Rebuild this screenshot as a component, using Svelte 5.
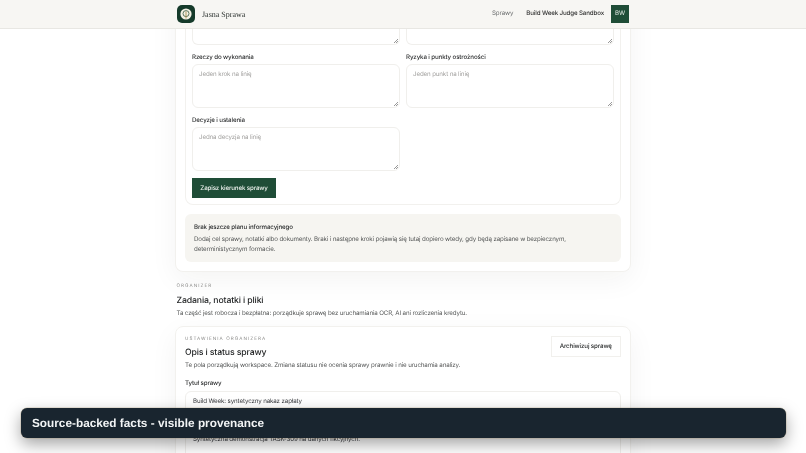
<script>
  const fields = [
    { label: 'Rzeczy do wykonania', hint: 'Jeden krok na linię' },
    { label: 'Ryzyka i punkty ostrożności', hint: 'Jeden punkt na linię' },
    { label: 'Decyzje i ustalenia', hint: 'Jedna decyzja na linię' }
  ];
</script>

<header class="topbar">
  <div class="brand">
    <span class="logo">
      <svg viewBox="0 0 18 18" width="18" height="18" aria-hidden="true">
        <circle cx="9" cy="9" r="5.6" fill="#f3f0e4" />
        <circle cx="9" cy="8.6" r="3" fill="none" stroke="#4d6b50" stroke-width="0.9" />
        <path d="M9 6.5v7" stroke="#a98f4e" stroke-width="0.9" />
      </svg>
    </span>
    <span class="brand-name">Jasna Sprawa</span>
  </div>
  <nav>
    <span class="nav-link">Sprawy</span>
    <span class="nav-user">Build Week Judge Sandbox</span>
    <span class="avatar">BW</span>
  </nav>
</header>

<main>
  <section class="card plan">
    <div class="panel">
      <div class="grid">
        <div class="field">
          <div class="area cut"></div>
        </div>
        <div class="field">
          <div class="area cut"></div>
        </div>
        {#each fields as f}
          <div class="field">
            <span class="label">{f.label}</span>
            <div class="area"><span class="hint">{f.hint}</span></div>
          </div>
        {/each}
      </div>
      <button class="primary">Zapisz kierunek sprawy</button>
    </div>
    <div class="notice">
      <strong>Brak jeszcze planu informacyjnego</strong>
      <p>Dodaj cel sprawy, notatki albo dokumenty. Braki i następne kroki pojawią się tutaj dopiero wtedy, gdy będą zapisane w bezpiecznym, deterministycznym formacie.</p>
    </div>
  </section>

  <section class="organizer">
    <div class="eyebrow">ORGANIZER</div>
    <h2>Zadania, notatki i pliki</h2>
    <p class="lead">Ta część jest robocza i bezpłatna: porządkuje sprawę bez uruchamiania OCR, AI ani rozliczenia kredytu.</p>
  </section>

  <section class="card settings">
    <div class="settings-head">
      <div>
        <div class="eyebrow">USTAWIENIA ORGANIZERA</div>
        <h3>Opis i status sprawy</h3>
        <p class="lead">Te pola porządkują workspace. Zmiana statusu nie ocenia sprawy prawnie i nie uruchamia analizy.</p>
      </div>
      <button class="ghost">Archiwizuj sprawę</button>
    </div>
    <div class="label title-label">Tytuł sprawy</div>
    <div class="input">Build Week: syntetyczny nakaz zapłaty</div>
    <div class="input tall">Syntetyczna demonstracja TASK-309 na danych fikcyjnych.</div>
  </section>
</main>

<div class="toast">Source-backed facts - visible provenance</div>

<style>
  :global(body) {
    margin: 0;
    background: #fff;
    height: 453px;
    overflow: hidden;
    font-family: Inter, "Liberation Sans", sans-serif;
    color: #2a2c2d;
    text-rendering: geometricPrecision;
    letter-spacing: -0.13px;
  }

  .topbar {
    position: relative;
    z-index: 2;
    height: 29px;
    box-sizing: border-box;
    background: #f7f6f3;
    border-bottom: 1px solid #e8e7e3;
    display: flex;
    justify-content: space-between;
    align-items: center;
    padding: 0 177px;
    will-change: transform;
  }

  .brand {
    display: flex;
    align-items: center;
    gap: 7px;
  }

  .logo {
    width: 18px;
    height: 18px;
    border-radius: 5px;
    background: #153a2a;
    display: block;
  }

  .logo svg {
    display: block;
  }

  .brand-name {
    font-family: "Liberation Serif", serif;
    font-size: 8px;
    letter-spacing: 0;
    color: #2d3330;
  }

  nav {
    display: flex;
    align-items: center;
    font-size: 6.2px;
    line-height: 10px;
  }

  .nav-link {
    color: #6c6e6f;
    margin-right: 13px;
  }

  .nav-user {
    font-weight: 500;
    color: #333;
    margin-right: 7px;
  }

  .avatar {
    width: 18px;
    height: 18px;
    background: #1f4d37;
    color: #e4ebe5;
    display: flex;
    align-items: center;
    justify-content: center;
    letter-spacing: 0;
  }

  main {
    width: 456px;
    margin: 0 0 0 175px;
    will-change: transform;
  }

  .card {
    background: #fff;
    border: 1px solid #f2f1ee;
    border-radius: 8px;
    box-sizing: border-box;
    box-shadow: 0 8px 28px rgba(30, 30, 20, 0.05);
  }

  .plan {
    margin-top: -40px;
    height: 283.3px;
    padding: 0 9px;
    border-top: 0;
  }

  .panel {
    height: 216px;
    box-sizing: border-box;
    border: 1px solid #f2f1ee;
    border-top: 0;
    border-radius: 0 0 8px 8px;
    padding: 0 6px;
  }

  .grid {
    display: grid;
    grid-template-columns: 207.5px 207.5px;
    column-gap: 6.5px;
    row-gap: 6.5px;
  }

  .field {
    display: flex;
    flex-direction: column;
  }

  .label {
    font-size: 6.2px;
    font-weight: 500;
    line-height: 11px;
    color: #303233;
    margin-bottom: 1.5px;
  }

  .area {
    height: 44px;
    box-sizing: border-box;
    border: 1px solid #f0efec;
    border-radius: 6px;
    padding: 4.5px 6px;
    position: relative;
    font-size: 6.2px;
    line-height: 9px;
  }

  .area::after {
    content: "";
    position: absolute;
    right: 1px;
    bottom: 1px;
    width: 4px;
    height: 4px;
    background: linear-gradient(135deg, transparent 50%, #999 50%, #999 60%, transparent 60%, transparent 75%, #999 75%, #999 85%, transparent 85%);
  }

  .area.cut {
    height: 56px;
    border-top: 0;
    border-radius: 0 0 6px 6px;
  }

  .hint {
    color: #a09f9d;
  }

  button {
    font-family: inherit;
    font-size: 6.2px;
    font-weight: 500;
    padding: 1px 0 0;
    letter-spacing: -0.13px;
    text-rendering: geometricPrecision;
  }

  .primary {
    display: block;
    margin-top: 6.5px;
    width: 84px;
    height: 20px;
    background: #1f4d37;
    color: #eef2ee;
    border: 0;
  }

  .notice {
    margin-top: 9px;
    height: 48px;
    box-sizing: border-box;
    background: #f6f5f1;
    border-radius: 6px;
    padding: 8.5px 9px;
    font-size: 6.2px;
  }

  .notice strong {
    font-weight: 500;
    display: block;
    color: #2c2e2f;
    line-height: 9px;
    margin-bottom: 3px;
  }

  .notice p {
    margin: 0;
    line-height: 10px;
    color: #555757;
  }

  .organizer {
    margin-top: 10.5px;
    padding-left: 1.5px;
  }

  .eyebrow {
    font-size: 4.6px;
    letter-spacing: 1.06px;
    color: #8a8a88;
    line-height: 7px;
  }

  h2 {
    margin: 5.2px 0 0;
    font-size: 8.7px;
    font-weight: 500;
    line-height: 12px;
    letter-spacing: -0.13px;
    color: #232526;
  }

  .lead {
    margin: 2.5px 0 0;
    font-size: 6.2px;
    line-height: 10px;
    color: #555757;
  }

  .settings {
    margin-top: 6.7px;
    height: 200px;
    padding: 9px 9.5px 0 9px;
  }

  .settings-head {
    display: flex;
    justify-content: space-between;
    align-items: flex-start;
  }

  h3 {
    margin: 3.5px 0 0;
    font-size: 8.7px;
    font-weight: 500;
    line-height: 12px;
    letter-spacing: -0.13px;
    color: #232526;
  }

  .ghost {
    width: 69.5px;
    height: 20.5px;
    background: #fff;
    border: 1px solid #f1f0ed;
    color: #2a2c2d;
  }

  .title-label {
    margin-top: 7px;
    margin-bottom: 2px;
  }

  .input {
    height: 26px;
    box-sizing: border-box;
    border: 1px solid #f0efec;
    border-radius: 6px;
    padding: 4.5px 7px;
    font-size: 6.2px;
    line-height: 9px;
    color: #34363a;
  }

  .input.tall {
    height: 40px;
    margin-top: 12px;
  }

  .toast {
    position: fixed;
    left: 20.5px;
    right: 20.5px;
    top: 408px;
    height: 30px;
    z-index: 5;
    box-sizing: border-box;
    background: #19252f;
    border-radius: 6px;
    padding: 0 12px 0 11.5px;
    display: flex;
    align-items: center;
    font-family: "Liberation Sans", sans-serif;
    font-size: 11.8px;
    font-weight: 700;
    letter-spacing: 0;
    color: #f2f4f5;
    box-shadow: 0 0 0 0.5px rgba(160, 140, 100, 0.45), 0 6px 16px rgba(0, 0, 0, 0.36);
  }
</style>
